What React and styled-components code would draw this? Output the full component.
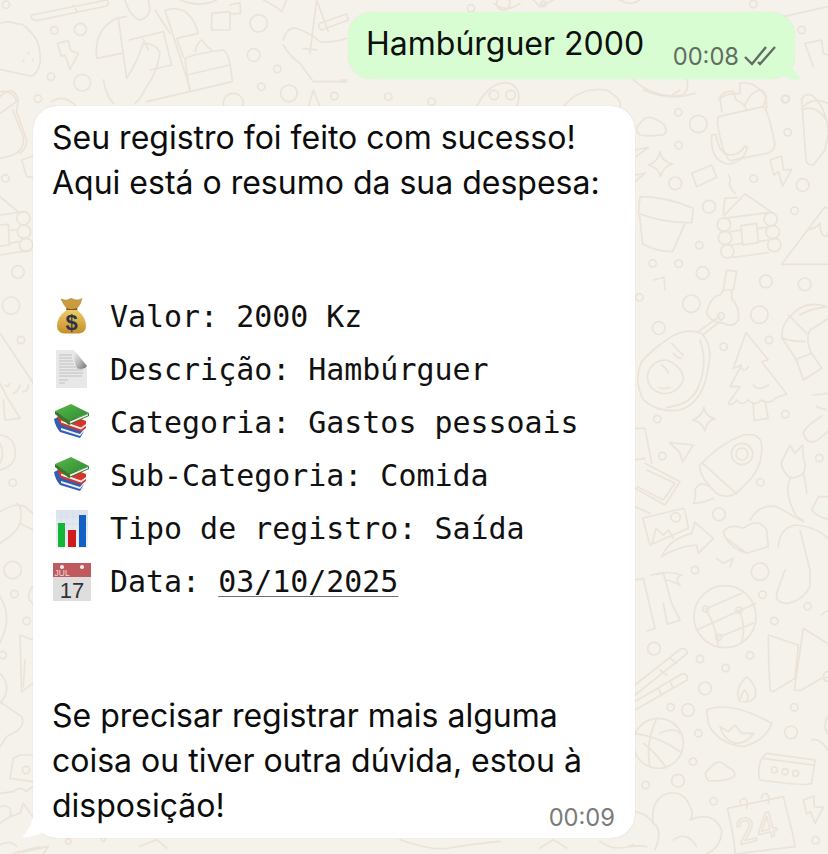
import React from "react";
import styled, { createGlobalStyle } from "styled-components";

const GlobalStyle = createGlobalStyle`
  html, body { margin: 0; padding: 0; background: #f5f1eb; }
  body { font-family: "Inter", "Liberation Sans", sans-serif; }
`;

// doodle wallpaper, each group is written in 3x coordinates from its origin
const doodleGroups = [
  {
    x: 630, y: 90,
    circles: [[145,67,11],[205,102,26],[146,166,11],[468,26,11],[473,127,11],[136,280,19],[371,266,11],[518,285,19],[237,350,19],[494,362,11],[208,466,11],[68,520,11],[146,521,11],[218,549,19],[408,574,19],[524,583,19],[282,404,20],[285,444,20],[292,484,20],[422,388,20],[428,426,20],[433,465,20]],
    paths: [
      "M265 80 L400 50 Q415 60 435 165 Q430 185 410 190 L300 212 Q280 200 262 100 Z",
      "M275 65 L270 20 Q285 0 310 5 L318 30 Q345 40 350 62 M345 45 Q365 0 395 0 Q410 10 410 55",
      "M245 135 L258 133 Q265 190 300 195 Q330 195 345 168 L352 172 Q340 220 290 222 Q240 210 245 135Z",
      "M30 135 Q10 120 30 100 Q50 70 80 90 Q110 100 108 125 Q100 140 85 135 Q60 140 30 135Z",
      "M90 185 Q95 215 128 222 Q100 228 92 260 Q85 232 55 225 Q85 215 90 185Z",
      "M185 250 L245 225 L260 262 L200 290Z",
      "M420 210 L455 198 L460 240 L485 238 L458 288 L445 245 L432 255Z",
      "M295 255 Q305 270 298 280 Q300 295 315 310",
      "M515 30 Q520 10 545 15 Q590 50 595 130 L585 180 L550 225 Q530 225 528 210 Z M515 60 Q555 40 590 90",
      "M30 320 Q110 320 190 355 L185 398 Q100 400 25 370 Z M28 372 L38 462 Q80 485 128 485 L165 400",
      "M280 378 L345 312 L430 370 M282 385 L415 368 M333 407 L380 400 L385 458 L338 465Z M280 370 L285 325 L322 322",
      "M300 425 L333 420 M385 415 L410 412 M305 465 L338 460 M385 455 L415 450 M310 502 L415 488",
      "M455 523 L585 350 L600 360 M455 523 L600 523 M530 420 Q560 415 570 400 Q570 440 590 440 L600 420",
      "M280 600 L290 540 L320 545 L310 600 M70 570 L102 562 L105 600",
      "M40 0 Q120 35 195 10 M120 20 L150 0 M15 180 L55 172 L18 200 M15 255 L45 250 L15 275",
    ],
  },
  {
    x: 630, y: 290,
    circles: [[28,22,11],[184,41,26],[388,74,26],[86,114,19],[281,170,11],[417,150,11],[82,387,11],[466,373,11],[97,498,11],[568,504,11],[391,577,11],[267,673,19],[273,78,10],[336,492,32],[336,492,18],[137,682,14]],
    paths: [
      "M215 130 Q160 110 110 150 Q70 175 35 215 Q10 270 40 330 Q85 370 150 360 Q220 340 235 230 Q250 170 215 130Z M210 150 Q235 220 205 290 Q185 345 110 352",
      "M205 125 L270 78 M218 135 L275 90",
      "M230 70 Q240 20 270 15 L280 0 L305 0 L305 25 Q330 50 325 90 Q310 115 280 100 Q240 95 230 70Z",
      "M52 260 Q60 210 110 210 Q160 230 160 270 Q140 315 95 310 Q55 300 52 260Z M95 225 Q115 240 115 250 M85 292 Q100 300 120 292 M125 160 Q140 180 160 195 M130 190 Q140 205 155 205",
      "M348 128 L415 210 L395 215 L470 312 L435 325 Q420 345 395 330 Q375 350 355 330 Q335 350 320 330 Q305 350 295 340 L330 290 L300 290 L335 225 L310 235Z",
      "M370 340 L372 392 L415 385 L405 335 M330 230 Q345 250 355 230 M370 285 Q385 305 415 285",
      "M590 50 Q530 30 490 70 Q445 110 460 150 L500 210 L520 270 L575 235 L545 190 Q525 150 540 120 Q590 90 600 80 M475 75 Q510 110 530 130 M455 145 Q490 155 525 155 M495 210 L545 190 M510 75 Q530 60 590 50",
      "M222 352 Q225 380 255 386 Q230 392 225 422 Q215 395 188 390 Q215 380 222 352Z",
      "M550 315 L600 310 M590 360 L560 350 M575 378 Q520 415 520 430 Q530 465 560 452 L600 420",
      "M15 415 L45 415 L65 520 M15 510 L45 505 M45 520 L150 575 L105 645 L15 595 M50 540 L135 580 L100 630 L22 590",
      "M118 458 L190 465 L158 515 L148 485Z",
      "M340 435 Q400 425 395 480 Q395 540 340 590 Q300 635 260 610 Q205 560 210 525 Q270 460 340 435Z M218 520 L320 612 M240 590 Q210 570 195 600 Q200 620 190 640 Q220 640 250 625",
      "M475 560 Q450 530 455 515 L480 465 L495 490 L518 465 L520 500 Q530 530 520 550 Q495 570 475 560Z M480 565 Q460 610 500 680 L520 690 M520 550 Q530 590 530 610",
      "M545 660 L565 620 L600 620 M545 660 Q560 680 600 690",
      "M38 685 L160 655 Q165 655 175 715 L60 765Z M65 765 L78 715 L100 735 L115 720 L130 745",
      "M95 800 Q115 750 185 730 L195 697 L250 745 L205 790 L200 765 Q140 770 95 800Z",
      "M280 725 Q300 700 340 715 Q385 680 410 720 L415 770 L350 790 Q290 770 280 725Z M290 745 Q330 775 350 790",
      "M360 690 Q390 640 440 650 L520 695 M445 770 Q450 710 500 705 Q560 710 600 750 M510 720 L540 840",
      "M260 805 L280 820 L310 805 L300 830 M15 650 L60 670",
    ],
  },
  {
    x: 630, y: 570,
    circles: [[398,74,11],[533,109,11],[433,153,11],[72,236,19],[210,267,11],[360,256,11],[287,294,11],[225,355,19],[122,412,11],[174,420,19],[493,412,11],[205,490,11],[483,487,19],[189,575,11],[47,645,11],[144,632,19],[251,694,11],[557,811,11],[195,0,11],[390,5,26],[285,140,93],[227,117,9],[327,120,9],[266,202,9],[595,320,15],[85,520,75],[433,600,9],[465,605,9],[497,610,9]],
    paths: [
      "M227 117 L335 70 M200 180 L378 100 M265 202 L370 160 M227 117 Q260 170 265 232 M327 120 Q350 170 335 215",
      "M15 30 L40 25 L75 175 L52 183 M62 15 L100 10 L125 100 L150 150 L112 163 L100 100 M65 15 Q110 0 155 15 Q130 25 150 45 Q115 30 110 30",
      "M465 0 L440 70 Q435 100 475 100 Q520 90 540 50 L540 0",
      "M415 195 L505 225 L495 325 L430 365 L420 360 Q415 280 415 195Z M520 175 L600 225 M520 175 L493 360 L510 362 L575 325 L600 320",
      "M15 345 L150 238 Q170 230 172 250 L15 375 M90 300 L110 315 M120 265 L140 280",
      "M15 395 L155 312 Q175 310 172 330 L15 420 M85 355 L95 375 M120 335 L130 355",
      "M15 490 Q90 500 155 548 M80 445 Q45 520 60 590 M90 490 Q130 470 150 490 M40 520 Q70 540 110 595",
      "M230 420 Q300 390 425 460 Q410 510 340 530 Q260 520 235 460Z M330 395 Q310 360 350 320 Q385 350 375 380 Q360 400 340 395 M332 388 Q335 365 345 360 Q360 380 350 392",
      "M270 470 L295 485 L315 465 L335 490 L372 490 Q350 520 320 520 Q285 515 270 470Z",
      "M235 632 Q215 610 240 595 Q265 560 290 590 Q320 600 312 620 Q290 635 235 632Z",
      "M395 565 L410 550 L555 570 L545 640 Q530 650 390 630 Q380 600 395 565Z M395 565 L550 585",
      "M15 725 Q50 730 70 760 Q60 700 100 675 Q160 650 185 720 Q190 740 180 750 Q250 720 275 780 Q275 830 230 852 M70 760 Q100 780 75 840 M130 810 Q170 780 200 830 M0 830 Q30 825 50 830",
      "M292 715 L460 680 L490 800 L495 830 L315 852 Q315 810 292 715Z M330 700 Q330 685 345 685 Q355 690 350 715 M395 685 Q395 670 410 670 Q420 680 415 700",
      "M520 690 L552 678 L553 710 L580 712 L555 760 L542 725 L530 732Z",
      "M575 135 Q590 120 600 120 M600 430 Q570 470 600 500 M545 510 Q570 500 600 550",
    ],
  },
  {
    x: 0, y: 0,
    circles: [[18,14,11],[163,91,11],[241,88,18],[153,230,11],[247,248,25],[114,296,11],[776,70,26],[761,165,19],[832,207,11],[784,260,11],[867,280,25],[1003,288,11],[700,310,30]],
    paths: [
      "M0 70 Q30 60 50 72 Q70 68 85 90 Q125 120 120 190 Q110 230 90 228 L0 208 M70 180 L72 185 M85 158 L86 162 M98 178 L99 182",
      "M172 130 L205 122 L212 152 L235 160 L210 208 L195 165 L185 170Z",
      "M95 45 L320 0 Q330 10 320 18 L110 62 Q90 60 95 45Z M220 15 L232 35",
      "M290 175 Q280 90 350 55 L378 50 M355 55 L380 235 Q410 190 430 130 Q470 130 480 160 Q470 220 440 260 Q420 300 405 310 M290 175 L365 160 M310 240 Q320 290 340 310",
      "M375 0 Q390 50 420 60 Q460 50 445 0 M388 120 L490 95 L515 195 L450 210 M430 118 L445 150",
      "M465 30 L510 100 M495 30 L570 265 M498 30 Q570 10 595 100 L530 115 L550 170",
      "M555 175 Q590 160 670 150 Q690 160 697 245 L570 275 Q560 220 555 175Z M560 225 L690 195 M440 305 L697 245 M585 155 Q590 130 605 120 Q625 145 635 150",
      "M635 40 L690 35 L690 90 L635 90Z M690 15 L720 8 L722 40 L690 42",
      "M540 0 Q600 25 650 0 M790 0 Q830 20 845 35 L860 0",
      "M850 120 Q860 80 890 85 Q930 100 960 125 Q1000 130 1040 115 M850 135 Q870 170 900 190 L940 245 L1040 245",
      "M950 0 L930 160 M910 145 L950 150 M950 0 L985 95 M960 70 L1040 42 L1045 60 L965 90 Q950 80 960 70",
      "M925 320 L940 270 L960 320 M0 290 Q40 250 55 300 L50 330 M155 305 Q190 280 230 320",
    ],
  },
  {
    x: 0, y: 90,
    circles: [[16,265,11],[54,546,19],[33,647,26],[63,750,11],[70,385,20],[72,425,20],[78,465,20]],
    paths: [
      "M0 5 Q40 0 50 35 L0 70 M38 60 L70 140 Q75 180 40 195 L0 205 M48 60 L80 150 Q80 175 60 190",
      "M65 210 L100 198 M65 210 L80 260 L100 262",
      "M0 375 L70 365 M0 495 L95 480 M0 320 L60 370 M0 405 L25 403 L28 465 L0 468 M30 420 L50 420 M30 460 L55 455",
      "M0 730 L60 820 L100 880 M0 880 L20 920 L60 985 L15 990 L10 930 M15 885 Q25 895 30 880 M40 910 Q55 905 60 885 M70 905 Q85 905 85 885",
      "M0 1035 Q50 1040 45 1100 Q40 1130 0 1140 M0 1060 Q15 1090 0 1120",
    ],
  },
  {
    x: 0, y: 470,
    circles: [[38,38,11],[38,300,26],[43,372,11],[80,453,11],[8,555,11],[78,900,11]],
    paths: [
      "M0 220 Q50 190 60 160 L100 180 M0 125 Q50 95 75 110 L98 130 M60 160 Q70 110 50 100 M97 350 Q75 380 97 400",
      "M0 380 Q30 430 15 480 L0 520 M60 495 L98 510 M60 495 L65 665 L98 640 M75 570 L70 650",
      "M0 610 Q30 640 15 680 L0 700 M0 695 L65 740 Q75 760 55 780 L20 800 L0 830",
      "M40 865 L60 855 L98 855 M40 865 L30 925 L98 935",
      "M0 970 L40 965 M40 965 Q60 945 78 965 L98 950 M0 1010 Q40 1000 30 1040 L0 1060 M30 1040 L60 1030 L70 1000 L98 1040 M40 1150 L120 1130",
    ],
  },
  {
    x: 340, y: 0,
    circles: [[393,25,11],[490,10,20],[610,12,8],[1240,12,11],[1385,90,11],[1335,298,11],[145,290,11],[275,305,11],[462,285,14],[512,285,14]],
    paths: [
      "M410 320 Q450 240 510 250 Q550 270 530 320 M670 320 Q720 260 800 270 Q850 300 840 320",
      "M880 240 Q950 300 1030 285 Q1050 260 1040 240 M1135 300 Q1150 280 1200 280 L1200 250 Q1240 240 1280 290 L1270 320",
      "M1390 320 Q1420 290 1464 310 M1395 130 L1445 120 L1450 160 L1464 165 M1395 130 L1420 200 M1330 50 L1464 20 M0 240 L20 240",
      "M460 10 Q500 40 540 10 M840 0 Q870 20 900 0 M580 0 L600 20 L640 0",
    ],
  },
  {
    x: 0, y: 838,
    circles: [[205,10,8],[310,4,6]],
    paths: [
      "M0 20 Q30 5 50 25 M55 45 L145 25 L130 48 M420 25 L470 5 L500 30",
      "M1200 5 Q1300 40 1350 30 Q1400 20 1500 10 M1620 30 L1660 5 L1700 30 M1800 10 Q1850 45 1900 20",
    ],
  },
];

function Wallpaper() {
  return (
    <Doodles viewBox="0 0 828 854">
      {doodleGroups.map((group) => (
        <g key={`${group.x}-${group.y}`} transform={`translate(${group.x} ${group.y}) scale(0.3333)`}>
          {group.circles.map(([cx, cy, r]) => (
            <circle key={`${cx}-${cy}-${r}`} cx={cx} cy={cy} r={r} />
          ))}
          {group.paths.map((d) => (
            <path key={d} d={d} />
          ))}
        </g>
      ))}
      <CalendarDigits transform="translate(739 845) rotate(-14)">24</CalendarDigits>
    </Doodles>
  );
}

function MoneyBag() {
  return (
    <EmojiSvg viewBox="0 0 40 40">
      <defs>
        <linearGradient id="bagFill" x1="0" y1="0" x2="0" y2="1">
          <stop offset="0" stopColor="#eccb66" />
          <stop offset="1" stopColor="#c58f2a" />
        </linearGradient>
      </defs>
      <path d="M9 2 Q14 4 16.5 2.5 Q19 0.5 22 2.5 Q26 4 30 1.5 Q29 7 25 11.5 L15 11.5 Q11 7 9 2Z" fill="#c99c3e" stroke="#a67a26" strokeWidth="0.5" />
      <path d="M14.5 11 Q19.5 13 25 11 L25.5 13.5 L14 13.5Z" fill="#7f5a1c" />
      <path d="M14.5 13 L25 13 Q34 20 34 29 Q34 35.5 27 36.5 L12 36.5 Q5 35.5 5 29 Q5 20 14.5 13Z" fill="url(#bagFill)" />
      <DollarSign x="19.5" y="32.5">$</DollarSign>
    </EmojiSvg>
  );
}

function DocumentPage() {
  return (
    <EmojiSvg viewBox="0 0 40 40">
      <defs>
        <linearGradient id="foldFill" x1="0" y1="0" x2="1" y2="1">
          <stop offset="0" stopColor="#f4f4f4" />
          <stop offset="0.5" stopColor="#bdbdbd" />
          <stop offset="1" stopColor="#6f6f6f" />
        </linearGradient>
      </defs>
      <path d="M4 0 L22 0 Q25 12 35 17 L35 38 L4 38Z" fill="#e8e8e8" />
      <path d="M22 0 L35 16 Q32 20 25 18.5 Q21 10 22 0Z" fill="url(#foldFill)" />
      <path d="M7 5 H20 M7 8 H20 M7 11 H21 M7 14 H22 M7 17 H24 M7 20 H31 M7 23 H31 M7 26 H30 M7 30 H16 M7 33 H13" stroke="#bcbcbc" strokeWidth="0.9" />
    </EmojiSvg>
  );
}

function Books({ id }) {
  return (
    <EmojiSvg viewBox="0 0 40 40">
      <defs>
        <linearGradient id={id} x1="0" y1="0" x2="1" y2="1">
          <stop offset="0" stopColor="#5ab84c" />
          <stop offset="1" stopColor="#2c8a30" />
        </linearGradient>
      </defs>
      <path d="M2 16 L6 14 L33 24 L31 30 L28 35 L8 29 Q3 23 2 16Z" fill="#2f5fb4" />
      <path d="M9 27 L28 33 L32 28 L32 26 L28 31 L9 25Z" fill="#f1f1f1" />
      <path d="M5 9 L9 8 L34 18 L34 25 L29 28.5 L8 21.5 Q5 15 5 9Z" fill="#d7352b" />
      <path d="M9 19.5 L29 26.5 L34 23 L34 21 L29 24.5 L9 17.5Z" fill="#f3f3f3" />
      <path d="M3 8 L19 1 L37 10 L17 18 Q10 13 3 8Z" fill={`url(#${id})`} />
      <path d="M3 8 L3 11 Q10 17 17 22 L37 13 L37 10 L17 18Z" fill="#2f7d2c" />
      <path d="M18 18.5 L36 11 L36 12.5 L18 20.5Z" fill="#f3f3f3" />
    </EmojiSvg>
  );
}

function BarChart() {
  return (
    <EmojiSvg viewBox="0 0 40 40">
      <defs>
        <linearGradient id="chartBack" x1="0" y1="0" x2="0" y2="1">
          <stop offset="0" stopColor="#dce3ec" />
          <stop offset="1" stopColor="#f0f2f6" />
        </linearGradient>
      </defs>
      <rect x="4" y="1" width="32" height="38" fill="url(#chartBack)" />
      <path d="M9 1 V39 M15 1 V39 M21 1 V39 M27 1 V39 M33 1 V39 M4 8 H36 M4 15 H36 M4 22 H36 M4 29 H36" stroke="#ccd5e2" strokeWidth="0.4" />
      <rect x="6" y="14" width="7" height="24" fill="#12b637" />
      <rect x="16" y="21" width="8" height="17" fill="#cf1a1f" />
      <rect x="27" y="6" width="7" height="32" fill="#1360c4" />
    </EmojiSvg>
  );
}

function CalendarPage() {
  return (
    <EmojiSvg viewBox="0 0 40 40">
      <rect x="1" y="1" width="38" height="38" fill="#dedede" />
      <rect x="1" y="1" width="38" height="14" fill="#bf5a5e" />
      <circle cx="10" cy="5" r="2" fill="#f3f3f3" />
      <circle cx="30" cy="5" r="2" fill="#f3f3f3" />
      <MonthLabel x="2.5" y="13.5">JUL</MonthLabel>
      <DayLabel x="20" y="36">17</DayLabel>
    </EmojiSvg>
  );
}

const summaryRows = [
  { icon: <MoneyBag />, text: "Valor: 2000 Kz" },
  { icon: <DocumentPage />, text: "Descrição: Hambúrguer" },
  { icon: <Books id="booksA" />, text: "Categoria: Gastos pessoais" },
  { icon: <Books id="booksB" />, text: "Sub-Categoria: Comida" },
  { icon: <BarChart />, text: "Tipo de registro: Saída" },
  { icon: <CalendarPage />, text: "Data: ", date: "03/10/2025" },
];

function App() {
  return (
    <>
      <GlobalStyle />
      <Page>
        <Wallpaper />
        <Outgoing>
          <OutgoingText>Hambúrguer 2000</OutgoingText>
          <OutgoingMeta>
            <OutgoingTime>00:08</OutgoingTime>
            <svg width="33" height="22" viewBox="0 0 33 22" fill="none" stroke="#5f6e63" strokeWidth="2.4">
              <path d="M1 12 L8 19 L22 2" />
              <path d="M14 17 L16 19 L31 2" />
            </svg>
          </OutgoingMeta>
          <OutgoingTail viewBox="0 0 24 26">
            <path d="M0 0 L6 0 Q8 17 18 25 Q8 27 0 21Z" fill="#d9fdd3" />
          </OutgoingTail>
        </Outgoing>
        <Incoming>
          <Paragraph>
            Seu registro foi feito com sucesso!
            <br />
            Aqui está o resumo da sua despesa:
          </Paragraph>
          <SummaryList>
            {summaryRows.map((row) => (
              <SummaryRow key={row.text}>
                <EmojiSlot>{row.icon}</EmojiSlot>
                <span>
                  {row.text}
                  {row.date && <DateLink>{row.date}</DateLink>}
                </span>
              </SummaryRow>
            ))}
          </SummaryList>
          <Closing>
            <ClosingText>
              Se precisar registrar mais alguma
              <br />
              coisa ou tiver outra dúvida, estou à
              <br />
              disposição!
            </ClosingText>
            <IncomingTime>00:09</IncomingTime>
          </Closing>
          <IncomingTail viewBox="0 0 24 28">
            <path d="M24 0 L13 0 Q12 15 1 26 Q12 27 24 20Z" fill="#fff" />
          </IncomingTail>
        </Incoming>
      </Page>
    </>
  );
}

export default App;

const Page = styled.div`
  position: relative;
  width: 828px;
  height: 854px;
  overflow: hidden;
  background: #f5f1eb;
  display: flex;
  flex-direction: column;
  align-items: flex-start;
  padding: 12px 33px 0;
  box-sizing: border-box;
`;

const Doodles = styled.svg`
  position: absolute;
  left: 0;
  top: 0;
  width: 828px;
  height: 854px;
  fill: none;
  stroke: #ebe3d8;
  stroke-width: 5px;
  stroke-linecap: round;
  stroke-linejoin: round;
`;

const CalendarDigits = styled.text`
  font-family: "Inter", sans-serif;
  font-size: 34px;
  stroke-width: 1.4px;
`;

const Outgoing = styled.div`
  position: relative;
  align-self: flex-end;
  width: 447px;
  height: 67px;
  box-sizing: border-box;
  padding: 0 18px;
  display: flex;
  justify-content: space-between;
  background: #d9fdd3;
  border-radius: 24px;
  box-shadow: 0 0 1px rgba(0, 0, 0, 0.1);
`;

const OutgoingText = styled.div`
  font-size: 32px;
  line-height: 63px;
  color: #0c0f0c;
`;

const OutgoingMeta = styled.div`
  display: flex;
  align-items: center;
  gap: 5px;
  margin-top: 19px;
  height: 50px;
`;

const OutgoingTime = styled.span`
  font-size: 23.7px;
  color: #5f6e63;
`;

const OutgoingTail = styled.svg`
  position: absolute;
  right: -12px;
  bottom: -1px;
  width: 24px;
  height: 26px;
`;

const Incoming = styled.div`
  position: relative;
  margin-top: 27px;
  width: 602px;
  height: 732px;
  box-sizing: border-box;
  padding: 10px 20px 0 19px;
  background: #fff;
  border-radius: 24px;
  box-shadow: 0 0 1px rgba(0, 0, 0, 0.18);
`;

const Paragraph = styled.div`
  font-size: 32px;
  line-height: 44.7px;
  color: #0c0c0c;
  white-space: nowrap;
`;

const SummaryList = styled.div`
  margin-top: 85px;
  display: flex;
  flex-direction: column;
`;

const SummaryRow = styled.div`
  display: flex;
  align-items: center;
  height: 53px;
  font-family: "DejaVu Sans Mono", monospace;
  font-size: 29.95px;
  color: #111;
  white-space: pre;
`;

const EmojiSlot = styled.div`
  width: 57px;
  display: flex;
  margin-right: 1px;
`;

const EmojiSvg = styled.svg`
  width: 40px;
  height: 40px;
`;

const DollarSign = styled.text`
  font-family: "Liberation Sans", sans-serif;
  font-size: 22px;
  font-weight: 700;
  fill: #2a3446;
  text-anchor: middle;
`;

const MonthLabel = styled.text`
  font-family: "Liberation Sans", sans-serif;
  font-size: 8.5px;
  fill: #f3dede;
`;

const DayLabel = styled.text`
  font-family: "Liberation Sans", sans-serif;
  font-size: 22px;
  fill: #333;
  text-anchor: middle;
`;

const DateLink = styled.span`
  text-decoration: underline;
  text-decoration-thickness: 1px;
  text-decoration-color: #6f6f6f;
  text-underline-offset: 4px;
`;

const Closing = styled.div`
  margin-top: 86px;
  display: flex;
  justify-content: space-between;
  align-items: flex-end;
`;

const ClosingText = styled(Paragraph)`
  flex: 1;
  min-width: 0;
`;

const IncomingTime = styled.span`
  font-size: 23.7px;
  line-height: 30px;
  color: #7a7a7a;
  margin-bottom: -4px;
`;

const IncomingTail = styled.svg`
  position: absolute;
  left: -12px;
  bottom: -1px;
  width: 24px;
  height: 28px;
`;
